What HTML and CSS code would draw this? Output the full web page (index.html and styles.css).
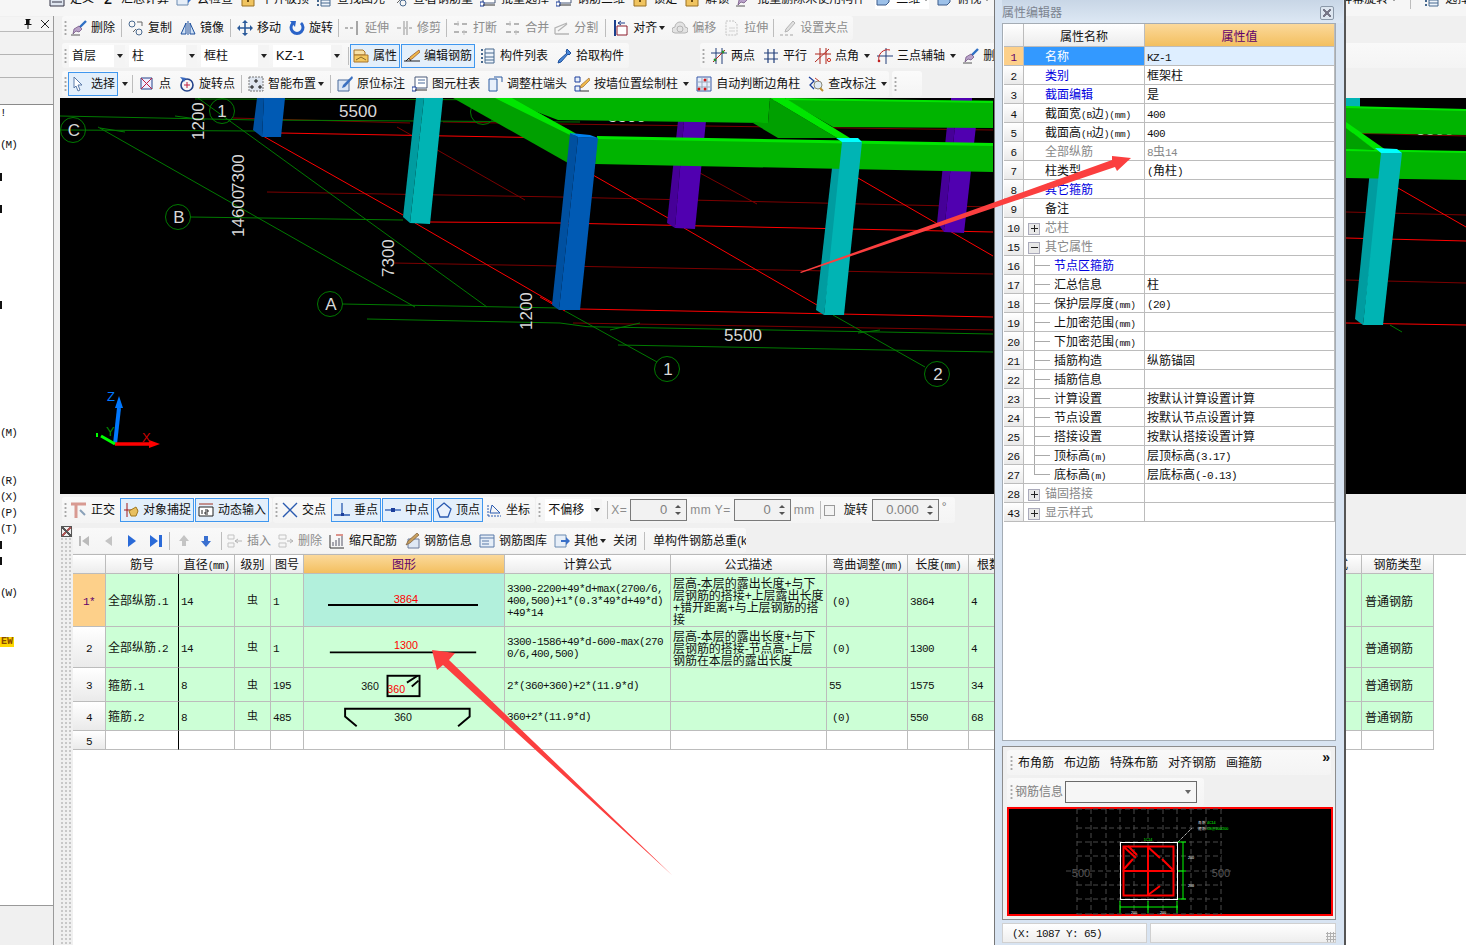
FILE: index.html
```html
<!DOCTYPE html>
<html lang="zh-CN">
<head>
<meta charset="utf-8">
<title>属性编辑器</title>
<link rel="stylesheet" href="styles.css">
</head>
<body>
<svg class="defs" aria-hidden="true">
  <symbol id="brush" viewBox="0 0 16 16"><path d="M15 1L8 8" stroke="#2f6fc4" stroke-width="2.4" fill="none"/><path d="M8 6l3 3-3 3-3-1-3 3 1-5z" fill="#b9a2c9" stroke="#6a4a7a" stroke-width=".7"/><path d="M0 15h9" stroke="#555"/></symbol>
  <symbol id="copy" viewBox="0 0 16 16"><circle cx="4" cy="4" r="3" fill="none" stroke="#4a6a90"/><circle cx="11" cy="12" r="3" fill="none" stroke="#4a6a90"/><path d="M9 2h5M14 2v4M8 9l-3 3" stroke="#666" fill="none"/></symbol>
  <symbol id="mirror" viewBox="0 0 16 16"><path d="M8 1v14" stroke="#1c4f9c"/><path d="M6 3v11H1zM10 3v11h5z" fill="#cfe0f4" stroke="#1c4f9c"/></symbol>
  <symbol id="move" viewBox="0 0 16 16"><path d="M8 1v14M1 8h14" stroke="#2b5a9a" stroke-width="1.6"/><path d="M8 0l3 3H5zM8 16l3-3H5zM0 8l3-3v6zM16 8l-3-3v6z" fill="#2b5a9a"/></symbol>
  <symbol id="rotate" viewBox="0 0 16 16"><path d="M4 3a6 6 0 1 0 8 0" fill="none" stroke="#2a63c8" stroke-width="3"/><path d="M1 1l6 0-1 6z" fill="#2a63c8"/></symbol>
  <symbol id="extend" viewBox="0 0 16 16"><path d="M12 1v14" stroke="#999" stroke-width="2"/><path d="M0 8h10" stroke="#aaa" stroke-dasharray="3 2" stroke-width="2"/></symbol>
  <symbol id="trim" viewBox="0 0 16 16"><path d="M7 1v14M10 1v14" stroke="#aaa" stroke-width="1.5"/><path d="M0 8h15" stroke="#bbb" stroke-width="2" stroke-dasharray="4 2"/></symbol>
  <symbol id="break" viewBox="0 0 16 16"><path d="M1 4h14M1 12h14" stroke="#aaa" stroke-width="2" stroke-dasharray="5 3"/><path d="M5 1v5M11 10v5" stroke="#bbb"/></symbol>
  <symbol id="split" viewBox="0 0 16 16"><path d="M1 14h14M1 14V8l12-5M4 11l9-7" stroke="#aaa" fill="none" stroke-width="1.3"/></symbol>
  <symbol id="align" viewBox="0 0 16 16"><path d="M2 0v16" stroke="#1c3f8c" stroke-width="2"/><path d="M4 6h10v9H4z" fill="#fff" stroke="#8c1c2c"/><path d="M5 3h7M5 3l3-2M5 3l3 2" stroke="#1c3f8c" fill="none"/></symbol>
  <symbol id="cloud" viewBox="0 0 16 16"><path d="M3 13a3 3 0 0 1 0-6 5 5 0 0 1 10 0 3 3 0 0 1 0 6z" fill="#e0e0e0" stroke="#aaa"/><circle cx="8" cy="9" r="3" fill="none" stroke="#aaa"/></symbol>
  <symbol id="stretch" viewBox="0 0 16 16"><path d="M2 1h8l3 3v11H2z" fill="none" stroke="#bbb" stroke-dasharray="2 1"/><path d="M5 8h6M5 11h6" stroke="#ccc"/></symbol>
  <symbol id="grippt" viewBox="0 0 16 16"><path d="M13 1l2 2-7 8-3 1 1-3z" fill="#ddd" stroke="#aaa"/><path d="M0 15h3M5 15h3M10 15h3" stroke="#999"/></symbol>
  <symbol id="prop" viewBox="0 0 16 16"><path d="M1 2h9l2 2v3H1z" fill="#f8e2a8" stroke="#a8742a"/><path d="M1 7h14v7H1z" fill="#f4c860" stroke="#a8742a"/><path d="M3 12l5-3 5 3" stroke="#8a6a2a" fill="none"/></symbol>
  <symbol id="edit" viewBox="0 0 16 16"><path d="M0 13h16" stroke="#222"/><path d="M2 13l3-3 2 3" fill="none" stroke="#222"/><path d="M15 2l1 2-8 7-3 1 1-3z" fill="#f0b848" stroke="#8a4a2a" stroke-width=".7"/></symbol>
  <symbol id="list" viewBox="0 0 16 16"><path d="M5 1h9v14H5z" fill="#eef4fb" stroke="#46688e"/><path d="M5 5h9M5 9h9M5 12h9" stroke="#46688e"/><path d="M1 2h2M1 6h2M1 10h2M1 14h2" stroke="#46688e" stroke-width="2"/></symbol>
  <symbol id="pick" viewBox="0 0 16 16"><path d="M11 1l4 4-2 2-1-1-7 8-3 1 1-3 8-7-1-1z" fill="#4a88d8" stroke="#1c4f9c"/></symbol>
  <symbol id="twopt" viewBox="0 0 16 16"><path d="M5 0v16M11 0v16M0 5h16" stroke="#223f7a"/><path d="M2 14L14 2" stroke="#b0261c"/><circle cx="4" cy="12" r="1.4" fill="#2a8a2a"/><circle cx="12" cy="4" r="1.4" fill="#2a8a2a"/></symbol>
  <symbol id="parallel" viewBox="0 0 16 16"><path d="M5 1v14M11 1v14M1 5h14M1 11h14" stroke="#223f7a" stroke-width="1.2"/></symbol>
  <symbol id="corner" viewBox="0 0 16 16"><path d="M5 0v16M11 0v16M0 6h16" stroke="#b0261c"/><path d="M0 14L14 1" stroke="#b0261c"/><circle cx="14" cy="12" r="1.6" fill="none" stroke="#d03020"/></symbol>
  <symbol id="arc" viewBox="0 0 16 16"><path d="M9 0v16M0 8h16" stroke="#223f7a"/><path d="M2 13a9 9 0 0 1 11-11" fill="none" stroke="#c02020"/><circle cx="2" cy="13" r="1.3" fill="#c02020"/></symbol>
  <symbol id="cursor" viewBox="0 0 16 16"><path d="M3 1l8 8H7l2 5-2 1-2-5-2 2z" fill="#fff" stroke="#5a7aa8"/></symbol>
  <symbol id="pointbox" viewBox="0 0 16 16"><path d="M2 2h11v11H2z" fill="#eef" stroke="#22428a"/><path d="M2 2l11 11M13 2L2 13" stroke="#c02040"/></symbol>
  <symbol id="rotpt" viewBox="0 0 16 16"><circle cx="8" cy="9" r="6" fill="none" stroke="#22428a" stroke-width="1.6"/><path d="M1 1l6 1-2 4z" fill="#3a6ac0"/><path d="M8 6v6M5 9h6" stroke="#c02040"/></symbol>
  <symbol id="smart" viewBox="0 0 16 16"><path d="M1 1h14v14H1z" fill="#dfe6f0" stroke="#777" stroke-dasharray="2 1"/><path d="M8 3v4M6 5h4M4 9v4M2 11h4M12 9v4M10 11h4" stroke="#111"/></symbol>
  <symbol id="orig" viewBox="0 0 16 16"><path d="M1 4h11v11H1z" fill="#dbe6f5" stroke="#4a6a9a"/><path d="M15 0l1 2-8 9-3 1 1-3z" fill="#3a70c0"/></symbol>
  <symbol id="coltab" viewBox="0 0 16 16"><path d="M3 1h12v11H3z" fill="#fff" stroke="#4a5a7a"/><path d="M6 4h7M6 7h7" stroke="#4a6a9a"/><path d="M0 11h4v4H0z" fill="#fff" stroke="#1c3f9c"/><path d="M3 14h12" stroke="#333"/></symbol>
  <symbol id="adj" viewBox="0 0 16 16"><path d="M2 3h8v12H2z" fill="#e8f0fb" stroke="#2a5aa0"/><path d="M7 1h8v5" fill="none" stroke="#2a5aa0"/></symbol>
  <symbol id="wall" viewBox="0 0 16 16"><path d="M1 1h5v5H1zM1 10h5v5H1z" fill="#e8f0fb" stroke="#1c3f9c"/><path d="M6 15h9" stroke="#333"/><path d="M15 2l1 2-7 7-3 1 1-3z" fill="#f0b848" stroke="#8a5a2a" stroke-width=".6"/></symbol>
  <symbol id="auto" viewBox="0 0 16 16"><path d="M1 1h14v14H1z" fill="#e6eefc" stroke="#3a5aa8"/><path d="M6 1v14M11 1v14M1 6h14M1 11h14" stroke="#9ab"/><circle cx="9" cy="4" r="1.5" fill="#d01818"/><circle cx="3" cy="13" r="1.5" fill="#d01818"/><circle cx="9" cy="13" r="1.5" fill="#d01818"/></symbol>
  <symbol id="chk" viewBox="0 0 16 16"><path d="M1 1l5 4-4 4 4 4" fill="none" stroke="#1c3f9c" stroke-width="1.3"/><circle cx="10" cy="9" r="4" fill="#dfeaf7" stroke="#887"/><path d="M12 12l3 3" stroke="#c09030" stroke-width="2"/><path d="M7 2l4 3" stroke="#c04030"/></symbol>
  <symbol id="ortho" viewBox="0 0 16 16"><path d="M0 2h15M5 2v14" stroke="#d89a92" stroke-width="3"/><path d="M9 8l5 5" stroke="#8aa0b8" stroke-width="2"/></symbol>
  <symbol id="snap" viewBox="0 0 16 16"><path d="M1 8h14" stroke="#a01818"/><path d="M4 1v14" stroke="#a01818"/><path d="M6 9l7-4 2 4-2 5H8z" fill="#e8c060" stroke="#a07820"/></symbol>
  <symbol id="dyn" viewBox="0 0 16 16"><path d="M1 2h14" stroke="#a03020"/><path d="M1 5h14v9H1z" fill="#fff" stroke="#222"/><path d="M4 8v4M7 8h3v2H7v2h3" stroke="#222" fill="none"/></symbol>
  <symbol id="cross" viewBox="0 0 16 16"><path d="M1 1l14 14M15 1L1 15" stroke="#2a5ab0" stroke-width="1.4"/></symbol>
  <symbol id="perp" viewBox="0 0 16 16"><path d="M8 1v13M0 13h16" stroke="#2a5ab0" stroke-width="1.3"/><rect x="7" y="11" width="3" height="3" fill="#1c3f9c"/></symbol>
  <symbol id="mid" viewBox="0 0 16 16"><path d="M0 8h16" stroke="#2a5ab0" stroke-width="1.3"/><rect x="6" y="6" width="4" height="4" fill="#1c3f9c"/></symbol>
  <symbol id="vertex" viewBox="0 0 16 16"><path d="M8 1l7 6-3 8H4L1 7z" fill="#eaf2fc" stroke="#2a5ab0" stroke-width="1.3"/></symbol>
  <symbol id="coord" viewBox="0 0 16 16"><path d="M2 14h13M2 14V2" stroke="#2a5ab0" stroke-dasharray="2 1"/><path d="M6 3l8 8H4z" fill="none" stroke="#2a5ab0"/></symbol>
  <symbol id="first" viewBox="0 0 16 16"><path d="M3 3h2v10H3zM13 3v10L6 8z" fill="#bbb"/></symbol>
  <symbol id="prev" viewBox="0 0 16 16"><path d="M12 3v10L5 8z" fill="#c4c4c4"/></symbol>
  <symbol id="next" viewBox="0 0 16 16"><path d="M4 2v12l8-6z" fill="#2a6ad8"/></symbol>
  <symbol id="last" viewBox="0 0 16 16"><path d="M2 2v12l8-6zM11 2h3v12h-3z" fill="#2a6ad8"/></symbol>
  <symbol id="up" viewBox="0 0 16 16"><path d="M8 2l5 6h-3v5H6V8H3z" fill="#c4c4c4"/></symbol>
  <symbol id="down" viewBox="0 0 16 16"><path d="M8 14l5-6h-3V3H6v5H3z" fill="#3a70d0"/></symbol>
  <symbol id="ins" viewBox="0 0 16 16"><path d="M1 2h6v4H1zM1 10h6v4H1z" fill="none" stroke="#bbb"/><path d="M8 8h7M8 8l3-2M8 8l3 2" stroke="#aaa" fill="none"/></symbol>
  <symbol id="del" viewBox="0 0 16 16"><path d="M1 2h7v4H1zM1 10h7v4H1z" fill="none" stroke="#bbb"/><path d="M9 8h6M15 8l-3-2M15 8l-3 2" stroke="#aaa" fill="none"/></symbol>
  <symbol id="scale" viewBox="0 0 16 16"><path d="M1 2v13h14" fill="none" stroke="#333"/><path d="M4 13V9M7 13V7M10 13V5M13 13V3" stroke="#556"/><path d="M7 2h7" stroke="#c03020"/></symbol>
  <symbol id="info" viewBox="0 0 16 16"><path d="M4 6h11v9H4z" fill="#dfe8f4" stroke="#6a7a9a"/><path d="M13 0l2 2-9 8-4 2 2-4z" fill="#c8a060" stroke="#6a4a2a" stroke-width=".6"/></symbol>
  <symbol id="lib" viewBox="0 0 16 16"><path d="M1 2h14v12H1z" fill="#e6eef8" stroke="#5a7aa8"/><path d="M1 5h14M3 8h7M3 11h7" stroke="#5a7aa8"/></symbol>
  <symbol id="other" viewBox="0 0 16 16"><path d="M1 2h11v12H1z" fill="#e6eef8" stroke="#6a8ab0"/><path d="M7 7h5V4l4 4-4 4V9H7z" fill="#3a70c8"/></symbol>
  <symbol id="def" viewBox="0 0 16 16"><path d="M1 1h14v14H1z" fill="#dfe6f0" stroke="#334"/><path d="M3 4h4v4H3zM9 4h4M9 7h4M3 11h10" stroke="#334" fill="none"/></symbol>
  <symbol id="lock" viewBox="0 0 16 16"><path d="M2 2h12v13H2z" fill="#f0c460" stroke="#9a7020"/><path d="M7 6h2v5H7z" fill="#6a4a10"/></symbol>
  <symbol id="box" viewBox="0 0 16 16"><path d="M2 4l3-3h9v10l-3 3H2z" fill="#9cc0e8" stroke="#3a5a8a"/></symbol>
  <symbol id="pin" viewBox="0 0 12 12"><path d="M3.5 1h5v1H8v4h1.5v1h-3v4h-1V7h-3V6H4V2h-.5zM7 2v4h.5V2z" fill="#111"/></symbol>
  <symbol id="close" viewBox="0 0 12 12"><path d="M2 2l8 8M10 2l-8 8" stroke="#222" fill="none"/></symbol>
</svg>

<header class="topbar">
  <div class="tb-top">
    <span class="btn"><svg class="i"><use href="#def"/></svg>定义</span>
    <span class="btn sigma"><b class="sig">Σ</b>汇总计算</span>
    <span class="btn"><svg class="i"><use href="#other"/></svg>云检查</span>
    <span class="btn"><svg class="i"><use href="#lock"/></svg>平齐板顶</span>
    <span class="btn"><svg class="i"><use href="#list"/></svg>查找图元</span>
    <span class="btn"><svg class="i"><use href="#copy"/></svg>查看钢筋量</span>
    <span class="btn"><svg class="i"><use href="#coltab"/></svg>批量选择</span>
    <span class="btn"><svg class="i"><use href="#coltab"/></svg>钢筋三维</span>
    <span class="btn"><svg class="i"><use href="#lock"/></svg>锁定</span>
    <span class="btn"><svg class="i"><use href="#lock"/></svg>解锁</span>
    <span class="btn"><svg class="i"><use href="#brush"/></svg>批量删除未使用构件</span>
    <span class="btn view2"><svg class="i"><use href="#box"/></svg>二维<i class="arr"></i></span>
    <span class="btn"><svg class="i"><use href="#box"/></svg>俯视<i class="arr"></i></span>
    <span class="btn far">屏幕旋转<i class="arr"></i></span>
    <span class="sep"></span>
    <span class="btn"><svg class="i"><use href="#list"/></svg>选择楼层</span>
  </div>
</header>

<div class="workspace">
  <aside class="dock">
    <div class="dock-title"><svg class="dock-ic"><use href="#pin"/></svg><svg class="dock-ic"><use href="#close"/></svg></div>
    <div class="dock-tab"></div>
    <div class="dock-tab"></div>
    <div class="dock-gap"></div>
    <div class="dock-list">
      <div>!</div><div></div><div>(M)</div><div></div><div><i class="tick"></i></div><div></div><div><i class="tick"></i></div><div></div><div></div><div></div><div></div><div></div><div><i class="tick"></i></div>
      <div></div><div></div><div></div><div></div><div></div><div></div><div></div><div>(M)</div><div></div><div></div>
      <div>(R)</div><div>(X)</div><div>(P)</div><div>(T)</div><div><i class="tick"></i></div><div><i class="tick"></i></div><div></div><div>(W)</div><div></div><div></div>
      <div><span class="new">EW</span></div>
    </div>
    <div class="dock-foot"></div>
  </aside>

  <main class="main">
    <div class="row r1">
      <div class="tb tb-edit">
        <i class="grip"></i>
        <span class="btn"><svg class="i"><use href="#brush"/></svg>删除</span><i class="sep"></i>
        <span class="btn"><svg class="i"><use href="#copy"/></svg>复制</span>
        <span class="btn"><svg class="i"><use href="#mirror"/></svg>镜像</span><i class="sep"></i>
        <span class="btn"><svg class="i"><use href="#move"/></svg>移动</span>
        <span class="btn"><svg class="i"><use href="#rotate"/></svg>旋转</span><i class="sep sep-s"></i>
        <span class="btn off"><svg class="i"><use href="#extend"/></svg>延伸</span>
        <span class="btn off"><svg class="i"><use href="#trim"/></svg>修剪</span><i class="sep sep-s"></i>
        <span class="btn off"><svg class="i"><use href="#break"/></svg>打断</span>
        <span class="btn off"><svg class="i"><use href="#break"/></svg>合并</span>
        <span class="btn off tight"><svg class="i"><use href="#split"/></svg>分割</span><i class="sep sep-w"></i>
        <span class="btn"><svg class="i"><use href="#align"/></svg>对齐<i class="arr"></i></span>
        <span class="btn off n1"><svg class="i"><use href="#cloud"/></svg>偏移</span>
        <span class="btn off"><svg class="i"><use href="#stretch"/></svg>拉伸</span><i class="sep sep-s"></i>
        <span class="btn off"><svg class="i"><use href="#grippt"/></svg>设置夹点</span>
      </div>
    </div>

    <div class="row r2">
      <div class="tb tb-combos">
        <i class="grip"></i>
        <span class="combo c56">首层<i class="drop"><i class="arr"></i></i></span>
        <span class="combo c68">柱<i class="drop"><i class="arr"></i></i></span>
        <span class="combo c68">框柱<i class="drop"><i class="arr"></i></i></span>
        <span class="combo c69"><span class="m">KZ-1</span><i class="drop"><i class="arr"></i></i></span>
        <i class="sep sep-n"></i>
        <span class="btn on"><svg class="i"><use href="#prop"/></svg>属性</span>
        <span class="btn on on-join"><svg class="i"><use href="#edit"/></svg>编辑钢筋</span>
        <span class="btn"><svg class="i"><use href="#list"/></svg>构件列表</span>
        <span class="btn"><svg class="i"><use href="#pick"/></svg>拾取构件</span>
      </div>
      <div class="tb tb-axis">
        <i class="grip"></i>
        <span class="btn"><svg class="i"><use href="#twopt"/></svg>两点</span>
        <span class="btn"><svg class="i"><use href="#parallel"/></svg>平行</span>
        <span class="btn"><svg class="i"><use href="#corner"/></svg>点角<i class="arr arr-w"></i></span>
        <span class="btn"><svg class="i"><use href="#arc"/></svg>三点辅轴<i class="arr arr-w"></i></span>
        <span class="btn"><svg class="i"><use href="#brush"/></svg>删除</span>
      </div>
    </div>

    <div class="row r3">
      <div class="tb tb-draw">
        <i class="grip"></i>
        <span class="btn on"><svg class="i"><use href="#cursor"/></svg>选择</span><i class="arr arr-solo"></i><i class="sep"></i>
        <span class="btn"><svg class="i"><use href="#pointbox"/></svg>点</span>
        <span class="btn"><svg class="i"><use href="#rotpt"/></svg>旋转点</span><i class="sep"></i>
        <span class="btn"><svg class="i"><use href="#smart"/></svg>智能布置<i class="arr"></i></span><i class="sep"></i>
        <span class="btn"><svg class="i"><use href="#orig"/></svg>原位标注</span>
        <span class="btn n1"><svg class="i"><use href="#coltab"/></svg>图元柱表</span>
        <span class="btn n1"><svg class="i"><use href="#adj"/></svg>调整柱端头</span>
        <span class="btn n1"><svg class="i"><use href="#wall"/></svg>按墙位置绘制柱<i class="arr arr-w"></i></span>
        <span class="btn"><svg class="i"><use href="#auto"/></svg>自动判断边角柱</span>
        <span class="btn"><svg class="i"><use href="#chk"/></svg>查改标注<i class="arr arr-w"></i></span>
      </div>
      <div class="tb tb-stub"><i class="grip"></i></div>
    </div>

    <svg class="scene" viewBox="60 98 1406 396" aria-label="三维视图">
      <rect x="60" y="98" width="1406" height="396" fill="#000"/>
      <g fill="none" stroke="#7a0000">
        <path d="M233 118L410 123M443 122L560 124L993 130M1346 133L1466 136"/>
        <path d="M267 192L560 197L993 207M1346 212L1466 215"/>
        <path d="M393 263L560 266L993 274M1346 280L1466 283"/>
        <path d="M573 323L993 330"/>
        <path d="M397 127L525 200M700 173L757 204"/>
      </g>
      <g fill="none" stroke="#f00">
        <path d="M280 133L560 138M430 222L560 223L993 232M1346 238L1466 241"/>
        <path d="M580 309L993 317M1346 323L1466 325"/>
        <path d="M263 136L403 215M415 223L553 303M593 175L668 218M684 228L817 305M858 178L993 256M1398 188L1466 227M540 297L565 311"/>
      </g>
      <g fill="none" stroke="#007a00">
        <path d="M60 116L257 120L580 122M60 130L260 131M195 99L993 101"/>
        <path d="M190 217L403 220"/>
        <path d="M342 304L560 308"/>
        <path d="M367 319L560 323L587 326.7L993 334"/>
        <path d="M618 345L993 352"/>
        <path d="M98 127L415 307M198 98L487 307M565 311L657 362M833 315L925 367M1390 325L1402 332"/>
        <path d="M100 128L125 132M175 116L205 120M610 330L640 323M858 333L880 330"/>
        <g stroke-width="1">
          <circle cx="73" cy="130" r="12.5"/><circle cx="222" cy="111" r="12.5"/><circle cx="178" cy="217" r="12.5"/><circle cx="330" cy="304" r="12.5"/><circle cx="667" cy="369" r="12.5"/><circle cx="937" cy="374" r="12.5"/><circle cx="483" cy="112" r="12.5"/>
        </g>
      </g>
      <g class="dim">
        <text x="74" y="136" text-anchor="middle">C</text>
        <text x="222" y="117" text-anchor="middle">1</text>
        <text x="179" y="223" text-anchor="middle">B</text>
        <text x="331" y="310" text-anchor="middle">A</text>
        <text x="668" y="375" text-anchor="middle">1</text>
        <text x="938" y="380" text-anchor="middle">2</text>
        <text x="358" y="117" text-anchor="middle">5500</text>
        <text x="743" y="341" text-anchor="middle">5500</text>
        <text x="627" y="122" text-anchor="middle">5500</text>
        <text x="897" y="125" text-anchor="middle">5500</text>
        <text x="1435" y="135" text-anchor="middle">5500</text>
        <text transform="translate(204 140) rotate(-90)">1200</text>
        <text transform="translate(244 237) rotate(-90)">14600</text>
        <text transform="translate(244 192) rotate(-90)">7300</text>
        <text transform="translate(394 277) rotate(-90)">7300</text>
        <text transform="translate(532 330) rotate(-90)">1200</text>
      </g>
      <!-- rear columns -->
      <polygon points="678,121 684,121 675,228 667,223" fill="#460098"/>
      <polygon points="684,121 706,121 695,229 675,228" fill="#5000b0"/>
      <polygon points="947,126 955,126 944,232 937,223" fill="#460098"/>
      <polygon points="955,126 976,126 964,233 944,232" fill="#5000b0"/>
      <polygon points="951,98 972,98 972,101 951,101" fill="#5000b0"/>
      <polygon points="257,98 264,98 262,137 253,130" fill="#0050a0"/>
      <polygon points="264,98 285,98 281,137 262,137" fill="#005ab4"/>
      <polygon points="416,98 424,98 410,223 403,217" fill="#009ca0"/>
      <polygon points="424,98 443,98 430,224 410,223" fill="#00b4b4"/>
      <rect x="1346" y="98" width="14" height="9" fill="#00b4b4"/>
      <!-- side of front columns behind beams -->
      <polygon points="832,168 842,168 824,315 816,310" fill="#009ca0"/>
      <polygon points="1370,170 1381,170 1363,325 1355,319" fill="#009ca0"/>
      <!-- beams -->
      <polygon points="500,98 770,98 768,123 558,120" fill="#00b400"/>
      <polygon points="785,99 993,102 993,128 833,127" fill="#00b400"/>
      <polygon points="1346,107 1466,110 1466,135 1346,133" fill="#00b400"/>
      <polygon points="785,98 993,101 993,103 787,100" fill="#00e600"/>
      <polygon points="1346,106 1466,109 1466,111 1346,108" fill="#00e600"/>
      <polygon points="453,98 512,98 575,133 568,163" fill="#00a000"/>
      <polygon points="495,98 512,98 578,135 570,135" fill="#00e600"/>
      <polygon points="770,98 768,123 753,123 778,138 837,138" fill="#00a000"/>
      <polygon points="770,98 785,98 850,138 837,138" fill="#00e600"/>
      <polygon points="1346,128 1346,149 1375,149" fill="#00a000"/>
      <polygon points="1346,122 1346,128 1375,150 1386,150" fill="#00e600"/>
      <polygon points="597,138 993,145 993,172 595,164" fill="#00b400"/>
      <polygon points="597,136 993,143 993,146 597,139" fill="#00e600"/>
      <polygon points="1346,149 1466,152 1466,180 1346,178" fill="#00b400"/>
      <polygon points="1346,149 1466,151 1466,153 1346,151" fill="#00e600"/>
      <!-- front columns -->
      <polygon points="570,133 578,137 559,310 552,305" fill="#0050a0"/>
      <polygon points="578,137 598,138 580,310 559,310" fill="#005ab4"/>
      <polygon points="570,133 590,135 598,138 578,137" fill="#0080f0"/>
      <polygon points="842,142 862,142 844,315 824,315" fill="#00b4b4"/>
      <polygon points="836,138 858,138 862,142 842,142" fill="#00ffff"/>
      <polygon points="1381,153 1402,153 1383,325 1363,325" fill="#00b4b4"/>
      <polygon points="1375,148 1397,149 1402,153 1381,153" fill="#00ffff"/>
      <!-- axes -->
      <g class="axes">
        <path d="M115 444L119 408" stroke="#0078ff" stroke-width="4"/>
        <path d="M119 396L123 408H115z" fill="#0078ff"/>
        <path d="M115 444H150" stroke="#f00" stroke-width="3.5"/>
        <path d="M160 444L149 440V448z" fill="#f00"/>
        <path d="M115 444L101 436" stroke="#0f0" stroke-width="3"/>
        <path d="M97 433v4" stroke="#0f0" stroke-width="2"/>
        <text x="107" y="401" fill="#0078ff">Z</text>
        <text x="142" y="442" fill="#c00">X</text>
        <text x="106" y="436" fill="#080">Y</text>
      </g>
    </svg>

    <div class="row r4">
      <div class="tb tb-snap">
        <i class="grip"></i>
        <span class="btn"><svg class="i"><use href="#ortho"/></svg>正交</span>
        <span class="btn on"><svg class="i"><use href="#snap"/></svg>对象捕捉</span>
        <span class="btn on on-join"><svg class="i"><use href="#dyn"/></svg>动态输入</span>
      </div>
      <div class="tb tb-pts">
        <i class="grip"></i>
        <span class="btn"><svg class="i"><use href="#cross"/></svg>交点</span>
        <span class="btn on"><svg class="i"><use href="#perp"/></svg>垂点</span>
        <span class="btn on on-join"><svg class="i"><use href="#mid"/></svg>中点</span>
        <span class="btn on on-join"><svg class="i"><use href="#vertex"/></svg>顶点</span>
        <span class="btn coordbtn"><svg class="i"><use href="#coord"/></svg>坐标</span>
      </div>
      <div class="tb tb-off">
        <i class="grip"></i>
        <span class="combo c57">不偏移<i class="drop"><i class="arr"></i></i></span>
        <i class="sep sep-n"></i>
        <span class="lbl">X=</span>
        <span class="spin"><span class="m">0</span><i class="spin-btns"><i class="up"></i><i class="dn"></i></i></span>
        <span class="lbl">mm Y=</span>
        <span class="spin"><span class="m">0</span><i class="spin-btns"><i class="up"></i><i class="dn"></i></i></span>
        <span class="lbl">mm</span>
        <i class="sep sep-n"></i>
        <i class="cb"></i>
        <span class="rot">旋转</span>
        <span class="spin spin-w"><span class="m">0.000</span><i class="spin-btns"><i class="up"></i><i class="dn"></i></i></span>
        <span class="deg">°</span>
      </div>
    </div>

    <div class="lower">
      <div class="strip"><span class="strip-x"></span><div class="dots"></div></div>
      <div class="lower-main">
        <div class="tb tb-rebar">
          <span class="btn nav"><svg class="i"><use href="#first"/></svg></span>
          <span class="btn nav"><svg class="i"><use href="#prev"/></svg></span>
          <span class="btn nav"><svg class="i"><use href="#next"/></svg></span>
          <span class="btn nav"><svg class="i"><use href="#last"/></svg></span>
          <i class="sep sep-a"></i>
          <span class="btn nav2"><svg class="i"><use href="#up"/></svg></span>
          <span class="btn nav2"><svg class="i"><use href="#down"/></svg></span>
          <i class="sep sep-b"></i>
          <span class="btn off"><svg class="i"><use href="#ins"/></svg>插入</span>
          <span class="btn off"><svg class="i"><use href="#del"/></svg>删除</span>
          <span class="btn"><svg class="i"><use href="#scale"/></svg>缩尺配筋</span>
          <span class="btn"><svg class="i"><use href="#info"/></svg>钢筋信息</span>
          <span class="btn"><svg class="i"><use href="#lib"/></svg>钢筋图库</span>
          <span class="btn"><svg class="i"><use href="#other"/></svg>其他<i class="arr"></i></span>
          <span class="btn">关闭</span>
          <i class="sep sep-c"></i>
          <span class="weight">单构件钢筋总重(kg)：0</span>
        </div>
        <div class="sheet">
        <table class="rebar">
          <colgroup>
            <col class="w33"><col class="w73"><col class="w56"><col class="w36"><col class="w33"><col class="w201"><col class="w166"><col class="w156"><col class="w81"><col class="w61"><col class="w41"><col class="w270"><col class="w82"><col class="w72">
          </colgroup>
          <thead>
            <tr>
              <th></th><th class="bk">筋号</th><th>直径<span class="m">(mm)</span></th><th>级别</th><th>图号</th><th class="hl">图形</th><th>计算公式</th><th>公式描述</th><th>弯曲调整<span class="m">(mm)</span></th><th>长度<span class="m">(mm)</span></th><th>根数</th><th></th><th class="clip">搭接形式</th><th>钢筋类型</th>
            </tr>
          </thead>
          <tbody>
            <tr class="h1">
              <td class="no sel"><span class="m">1*</span></td><td class="bk">全部纵筋<span class="m">.1</span></td><td class="m">14</td><td class="ctr">虫</td><td class="m">1</td>
              <td class="shape cur"><svg class="sh" viewBox="0 0 200 52"><path d="M24 31H174" stroke="#000" stroke-width="2"/><text x="102" y="29" class="t-r" text-anchor="middle">3864</text></svg></td>
              <td class="m f">3300-2200+49*d+max(2700/6,<br>400,500)+1*(0.3*49*d+49*d)<br>+49*14</td>
              <td class="d">层高-本层的露出长度+与下<br>层钢筋的搭接+上层露出长度<br>+错开距离+与上层钢筋的搭<br>接</td>
              <td class="m bend">(0)</td><td class="m">3864</td><td class="m">4</td><td></td><td></td><td class="kind">普通钢筋</td>
            </tr>
            <tr class="h2">
              <td class="no"><span class="m">2</span></td><td class="bk">全部纵筋<span class="m">.2</span></td><td class="m">14</td><td class="ctr">虫</td><td class="m">1</td>
              <td class="shape"><svg class="sh" viewBox="0 0 200 41"><path d="M24 26H174" stroke="#000" stroke-width="2"/><text x="102" y="23" class="t-r" text-anchor="middle">1300</text></svg></td>
              <td class="m f">3300-1586+49*d-600-max(270<br>0/6,400,500)</td>
              <td class="d">层高-本层的露出长度+与下<br>层钢筋的搭接-节点高-上层<br>钢筋在本层的露出长度</td>
              <td class="m bend">(0)</td><td class="m">1300</td><td class="m">4</td><td></td><td></td><td class="kind">普通钢筋</td>
            </tr>
            <tr class="h3">
              <td class="no"><span class="m">3</span></td><td class="bk">箍筋<span class="m">.1</span></td><td class="m">8</td><td class="ctr">虫</td><td class="m">195</td>
              <td class="shape"><svg class="sh" viewBox="0 0 200 34"><rect x="83" y="8" width="33" height="21" fill="none" stroke="#000" stroke-width="2"/><path d="M103 15L114 8M108 19L115 13" stroke="#000" stroke-width="2"/><text x="65" y="23" class="t-b" text-anchor="middle">360</text><text x="92" y="26" class="t-r" text-anchor="middle">360</text></svg></td>
              <td class="m f">2*(360+360)+2*(11.9*d)</td><td></td>
              <td class="m">55</td><td class="m">1575</td><td class="m">34</td><td></td><td></td><td class="kind">普通钢筋</td>
            </tr>
            <tr class="h4">
              <td class="no"><span class="m">4</span></td><td class="bk">箍筋<span class="m">.2</span></td><td class="m">8</td><td class="ctr">虫</td><td class="m">485</td>
              <td class="shape"><svg class="sh" viewBox="0 0 200 29"><path d="M51 25L39 15V7H168V15L156 25" fill="none" stroke="#000" stroke-width="2"/><text x="99" y="20" class="t-b" text-anchor="middle">360</text></svg></td>
              <td class="m f">360+2*(11.9*d)</td><td></td>
              <td class="m bend">(0)</td><td class="m">550</td><td class="m">68</td><td></td><td></td><td class="kind">普通钢筋</td>
            </tr>
            <tr class="h5 blank">
              <td class="no"><span class="m">5</span></td><td class="bk"></td><td></td><td></td><td></td><td></td><td></td><td></td><td></td><td></td><td></td><td></td><td></td><td></td>
            </tr>
          </tbody>
        </table>
        </div>
      </div>
    </div>
  </main>
</div>

<section class="win">
  <div class="win-title"><span>属性编辑器</span><span class="win-x"></span></div>
  <div class="grid-panel">
    <table class="props">
      <colgroup><col class="p20"><col class="p121"><col class="p190"></colgroup>
      <thead><tr><th></th><th>属性名称</th><th class="hl">属性值</th></tr></thead>
      <tbody>
        <tr class="sel-row"><td class="no sel"><span class="m">1</span></td><td class="name">名称</td><td class="val"><span class="m">KZ-1</span></td></tr>
        <tr><td class="no"><span class="m">2</span></td><td class="name link">类别</td><td>框架柱</td></tr>
        <tr><td class="no"><span class="m">3</span></td><td class="name link">截面编辑</td><td>是</td></tr>
        <tr><td class="no"><span class="m">4</span></td><td class="name">截面宽<span class="m">(B</span>边<span class="m">)(mm)</span></td><td class="m">400</td></tr>
        <tr><td class="no"><span class="m">5</span></td><td class="name">截面高<span class="m">(H</span>边<span class="m">)(mm)</span></td><td class="m">400</td></tr>
        <tr class="mute"><td class="no"><span class="m">6</span></td><td class="name">全部纵筋</td><td><span class="m">8</span>虫<span class="m">14</span></td></tr>
        <tr><td class="no"><span class="m">7</span></td><td class="name">柱类型</td><td><span class="m">(</span>角柱<span class="m">)</span></td></tr>
        <tr><td class="no"><span class="m">8</span></td><td class="name link">其它箍筋</td><td></td></tr>
        <tr><td class="no"><span class="m">9</span></td><td class="name">备注</td><td></td></tr>
        <tr class="mute"><td class="no"><span class="m">10</span></td><td class="name grp"><i class="ex plus"></i>芯柱</td><td></td></tr>
        <tr class="mute"><td class="no"><span class="m">15</span></td><td class="name grp"><i class="ex"></i>其它属性</td><td></td></tr>
        <tr><td class="no"><span class="m">16</span></td><td class="name tree link">节点区箍筋</td><td></td></tr>
        <tr><td class="no"><span class="m">17</span></td><td class="name tree">汇总信息</td><td>柱</td></tr>
        <tr><td class="no"><span class="m">18</span></td><td class="name tree">保护层厚度<span class="m">(mm)</span></td><td class="m">(20)</td></tr>
        <tr><td class="no"><span class="m">19</span></td><td class="name tree">上加密范围<span class="m">(mm)</span></td><td></td></tr>
        <tr><td class="no"><span class="m">20</span></td><td class="name tree">下加密范围<span class="m">(mm)</span></td><td></td></tr>
        <tr><td class="no"><span class="m">21</span></td><td class="name tree">插筋构造</td><td>纵筋锚固</td></tr>
        <tr><td class="no"><span class="m">22</span></td><td class="name tree">插筋信息</td><td></td></tr>
        <tr><td class="no"><span class="m">23</span></td><td class="name tree">计算设置</td><td>按默认计算设置计算</td></tr>
        <tr><td class="no"><span class="m">24</span></td><td class="name tree">节点设置</td><td>按默认节点设置计算</td></tr>
        <tr><td class="no"><span class="m">25</span></td><td class="name tree">搭接设置</td><td>按默认搭接设置计算</td></tr>
        <tr><td class="no"><span class="m">26</span></td><td class="name tree">顶标高<span class="m">(m)</span></td><td>层顶标高<span class="m">(3.17)</span></td></tr>
        <tr><td class="no"><span class="m">27</span></td><td class="name tree tree-end">底标高<span class="m">(m)</span></td><td>层底标高<span class="m">(-0.13)</span></td></tr>
        <tr class="mute"><td class="no"><span class="m">28</span></td><td class="name grp"><i class="ex plus"></i>锚固搭接</td><td></td></tr>
        <tr class="mute"><td class="no"><span class="m">43</span></td><td class="name grp"><i class="ex plus"></i>显示样式</td><td></td></tr>
      </tbody>
    </table>
  </div>

  <div class="section-panel">
    <div class="tb tb-sec">
      <i class="grip"></i>
      <span class="sec-btn">布角筋</span><span class="sec-btn">布边筋</span><span class="sec-btn">特殊布筋</span><span class="sec-btn">对齐钢筋</span><span class="sec-btn">画箍筋</span>
      <span class="more">»</span>
    </div>
    <div class="tb tb-sec2">
      <i class="grip"></i>
      <span class="sec-lbl">钢筋信息</span>
      <span class="sec-combo"><i class="arr"></i></span>
    </div>
    <svg class="section" viewBox="1007 808 326 109" aria-label="截面图">
      <rect x="1007" y="808" width="326" height="109" fill="#000" stroke="#f00" stroke-width="4"/>
      <g stroke="#4a4a4a" stroke-dasharray="5 3" fill="none">
        <path d="M1077 810V915M1091 810V915M1106 810V915M1120 810V915M1134 810V915M1148 810V915M1163 810V915M1177 810V915M1191 810V915M1206 810V915M1221 810V915"/>
        <path d="M1077 810H1222M1077 829H1222M1077 843H1222M1077 857H1222M1066 872H1232M1077 886H1222M1077 900H1222M1077 915H1222"/>
      </g>
      <text x="1081" y="878" class="sec-t" text-anchor="middle">500</text>
      <text x="1221" y="878" class="sec-t" text-anchor="middle">500</text>
      <rect x="1120.5" y="843.5" width="57" height="57" fill="none" stroke="#fff" stroke-width="1"/>
      <g stroke="#f00" fill="none" stroke-width="2">
        <rect x="1123.5" y="847.5" width="50" height="49"/>
        <path d="M1148 847V897M1123 872H1174M1124 848L1136 859M1128 847L1137 856M1124 870L1133 860M1148 848L1160 859M1162 860L1173 871M1148 896L1160 887"/>
      </g>
      <path d="M1178 843L1192 829" stroke="#fff" stroke-dasharray="1 1"/>
      <path d="M1183 843V900M1120 908H1178" stroke="#0f0"/>
      <path d="M1178 843H1186M1178 872H1186M1178 900H1186M1120 902V914M1148 902V914M1177 902V914" stroke="#0f0"/>
      <text x="1198" y="825" class="sec-s" fill="#ddd">角筋</text>
      <text x="1198" y="831" class="sec-s" fill="#ddd">箍筋</text>
      <text x="1207" y="825" class="sec-s" fill="#0f0">4C14</text>
      <text x="1207" y="831" class="sec-s" fill="#0f0">C8@100/200</text>
      <text x="1148" y="842" class="sec-s" fill="#0f0" text-anchor="middle">1C14</text>
      <text x="1188" y="860" class="sec-s" fill="#fff">200</text>
      <text x="1188" y="888" class="sec-s" fill="#fff">200</text>
      <text x="1134" y="915" class="sec-s" fill="#fff" text-anchor="middle">200</text>
      <text x="1163" y="915" class="sec-s" fill="#fff" text-anchor="middle">200</text>
    </svg>
  </div>
  <div class="status">
    <span class="st-a"><span class="m">(X: 1087 Y: 65)</span></span>
    <span class="st-b"></span>
    <i class="st-grip"></i>
  </div>
</section>

<svg class="marks" viewBox="0 0 1466 945" aria-hidden="true">
  <polygon points="800,272 1112,160 1112,156 1131,158 1117,171 1115,167 801,273" fill="#fb3f3f"/>
  <polygon points="673,876 449,660 455,653 432,650 437,670 443,665" fill="#fb3f3f"/>
</svg>
</body>
</html>
```

FILE: styles.css
```css
* { box-sizing: border-box; }
html, body { margin: 0; padding: 0; }
body {
  position: relative;
  width: 1466px;
  height: 945px;
  overflow: hidden;
  background: #f0f0f0;
  color: #111;
  font: 12px/16px "Liberation Sans", "Noto Sans CJK SC", sans-serif;
}
i { font-style: normal; display: block; }
.defs { display: block; width: 0; height: 0; }
.m { font-family: "Liberation Mono", "Noto Sans CJK SC", monospace; font-size: 11px; letter-spacing: -.6px; }
td.m, th.m { letter-spacing: -.6px; }

/* top bar, cropped by the window edge */
.topbar { height: 16px; overflow: hidden; background: #f6f6f6; }
.tb-top { display: flex; align-items: center; gap: 7px; height: 16px; margin-top: -9px; padding-left: 49px; white-space: nowrap; }
.tb-top .btn { gap: 5px; }
.sig { font: bold 13px "Liberation Sans", sans-serif; width: 12px; margin-left: 3px; }
.sigma { gap: 5px; }
.view2 { margin-left: 3px; background: #fff; }
.far { margin-left: 343px; }
.tb-top .sep { margin: 0 6px; height: 20px; }

.workspace { display: flex; height: 929px; }

/* left dock */
.dock { flex: 0 0 54px; border-right: 1px solid #9a9a9a; display: flex; flex-direction: column; overflow: hidden; }
.dock-title { height: 15px; margin-top: 1px; display: flex; justify-content: flex-end; align-items: center; gap: 5px; padding-right: 2px; background: #f4f4f4; border-bottom: 1px solid #bbb; }
.dock-ic { width: 12px; height: 12px; flex: none; display: block; }
.dock-tab { height: 23px; background: #f2f2f2; border-bottom: 1px solid #b4b4b4; }
.dock-gap { height: 27px; border-bottom: 1px solid #8a8a8a; }
.dock-list { height: 800px; background: #fff; overflow: hidden; font: 11px/16px "Liberation Mono", monospace; letter-spacing: -1px; }
.dock-list div { height: 16px; white-space: nowrap; display: flow-root; }
.tick { width: 2px; height: 8px; margin-top: 4px; background: #111; }
.new { display: inline-block; background: #ffd800; color: #8a4a00; font-size: 10px; line-height: 10px; font-weight: bold; padding: 0 1px; letter-spacing: 0; }
.dock-foot { flex: 1; border-top: 1px solid #999; }

/* main column */
.main { flex: 1; min-width: 0; margin-left: 6px; display: flex; flex-direction: column; }
.row { display: flex; align-items: stretch; white-space: nowrap; }
.r1 { height: 24px; margin-left: 2px; }
.r2 { height: 25px; margin-top: 3px; margin-left: 2px; }
.r3 { height: 26px; margin-top: 3px; margin-left: 2px; }
.r4 { height: 26px; margin-top: 3px; margin-left: 2px; gap: 1px; }

.tb { display: flex; align-items: center; gap: 8px; background: linear-gradient(#f9f9f9, #f4f4f4); border-radius: 3px; padding-right: 5px; }
.grip { width: 3px; height: 16px; margin: 0 -1px 0 2px; background: radial-gradient(circle, #a8a8a8 1px, transparent 1.2px) 0 0 / 3px 4px; flex: none; }
.tb-edit .grip { margin-right: -4px; }
.btn { display: inline-flex; align-items: center; gap: 4px; height: 20px; white-space: nowrap; flex: none; }
.i { width: 16px; height: 16px; flex: none; display: block; }
.off { color: #8c8c8c; }
.off .i { opacity: .85; }
.sep { width: 1px; height: 18px; background: #bdbdbd; margin: 0 -2px; flex: none; }
.sep-s { margin: 0 -2px 0 -3px; }
.sep-w { margin: 0 -1px; }
.sep-n { margin: 0 -4px; }
.tight { margin-left: -3px; }
.n1 { margin-left: -1px; }
.arr { width: 0; height: 0; border: 3.5px solid transparent; border-top: 4px solid #222; border-bottom: 0; margin-left: -2px; flex: none; }
.arr-w { margin-left: 1px; margin-right: -1px; }
.arr-solo { margin: 0 -2px 0 -4px; }
.on { background: #e3effb; border: 1px solid #3f97ef; height: 24px; padding: 0 2px; }
.on-join { margin-left: -7px; }

.tb-combos { gap: 4px; padding-right: 5px; }
.tb-combos .grip { margin-right: -2px; }
.tb-combos .sep-n { margin: 0 -3px 0 2px; }
.tb-combos .on-join { margin-left: -3px; }
.tb-combos .btn:nth-last-child(2) { margin-left: 1px; }
.tb-combos .btn:last-child { margin-left: 4px; }
.combo { display: flex; align-items: center; justify-content: space-between; height: 22px; background: #fff; padding-left: 3px; flex: none; }
.combo .m { font: 13px "Liberation Sans", sans-serif; letter-spacing: 0; }
.c56 { width: 56px; } .c57 { width: 57px; } .c68 { width: 68px; } .c69 { width: 69px; }
.drop { display: flex; align-items: center; justify-content: center; width: 11px; height: 22px; background: #f4f4f4; }
.drop .arr { margin: 0; }
.tb-axis { margin-left: 71px; flex: 1; border-radius: 3px 0 0 3px; }
.tb-axis .grip { margin-right: -2px; }

.tb-draw .grip { margin-right: -7px; }
.tb-draw { padding-right: 3px; }
.tb-stub { margin-left: 3px; width: 30px; background: linear-gradient(#fbfbfb, #f4f4f4); }
.tb-stub .grip { margin-left: 2px; }

/* 3D scene */
.scene { display: block; width: 1406px; height: 396px; margin-top: 1px; flex: none; }
.dim text { fill: #d8d8d8; font: 17px "Liberation Sans", sans-serif; }
.axes text { font: 13px "Liberation Sans", sans-serif; }

/* snapping bar */
.tb-snap { gap: 5px; padding-right: 3px; }
.tb-snap .on-join { margin-left: -4px; }
.tb-pts { gap: 5px; padding-right: 5px; }
.tb-pts .on-join { margin-left: -4px; }
.coordbtn { margin-left: -2px; }
.tb-off { gap: 3px; padding-right: 8px; }
.tb-off .grip { margin-right: 1px; }
.tb-off .sep-n { margin: 0 0 0 2px; }
.lbl { color: #8c8c8c; font-family: "Liberation Sans", sans-serif; font-size: 12px; letter-spacing: .5px; }
.spin { display: flex; justify-content: flex-end; align-items: center; width: 57px; height: 22px; border: 1px solid #7a7a7a; background: #f2f2f2; color: #808080; flex: none; }
.spin .m { font-size: 13px; letter-spacing: 0; font-family: "Liberation Sans", sans-serif; }
.spin-w { width: 67px; margin-left: 1px; }
.spin-btns { width: 16px; height: 20px; margin-left: 3px; display: flex; flex-direction: column; justify-content: center; align-items: center; gap: 4px; }
.up { width: 0; height: 0; border: 3px solid transparent; border-bottom: 3px solid #555; border-top: 0; }
.dn { width: 0; height: 0; border: 3px solid transparent; border-top: 3px solid #555; border-bottom: 0; }
.cb { width: 11px; height: 11px; border: 1px solid #9a9a9a; background: #f4f4f4; flex: none; }
.rot { margin-left: 6px; }
.deg { color: #777; align-self: flex-start; margin-top: 2px; }

/* lower section */
.lower { display: flex; flex: 1; min-height: 0; margin-top: 2px; }
.strip { flex: 0 0 13px; display: flex; flex-direction: column; align-items: center; }
.strip-x { display: block; width: 11px; height: 11px; margin-top: 1px; border: 1px solid #555; background: linear-gradient(45deg, transparent 44%, #555 44%, #555 56%, transparent 56%), linear-gradient(-45deg, transparent 44%, #a55 44%, #a55 56%, transparent 56%), #eee; flex: none; }
.dots { flex: 1; width: 100%; background: radial-gradient(circle, #c8c8c8 1px, transparent 1.2px) 0 0 / 4px 4px; }
.lower-main { flex: 1; min-width: 0; display: flex; flex-direction: column; }
.tb-rebar { width: 673px; height: 25px; margin-top: 3px; padding-left: 2px; overflow: hidden; white-space: nowrap; gap: 7px; flex: none; }
.nav { width: 17px; justify-content: center; }
.nav2 { width: 15px; justify-content: center; }
.sep-a { margin: 0 -1px 0 -2px; }
.sep-b { margin: 0 -2px 0 1px; }
.sep-c { margin: 0 1px 0 0; }
.weight { flex: none; }
.sheet { flex: 1; background: #fff; border-top: 1px solid #b8b8b8; margin-top: 1px; overflow: hidden; }

/* tables */
table { border-collapse: separate; border-spacing: 0; table-layout: fixed; font-size: 12px; }
.rebar { width: 1361px; }
.w33 { width: 33px; } .w73 { width: 73px; } .w56 { width: 56px; } .w36 { width: 36px; } .w201 { width: 201px; }
.w166 { width: 166px; } .w156 { width: 156px; } .w81 { width: 81px; } .w61 { width: 61px; } .w41 { width: 41px; }
.w270 { width: 270px; } .w82 { width: 82px; } .w72 { width: 72px; }
th { font-weight: normal; padding: 3px 0 0; overflow: hidden; white-space: nowrap; background: linear-gradient(#fff, #ececec); border-right: 1px solid #bcbcbc; border-bottom: 1px solid #bcbcbc; }
td { padding: 3px 0 0 2px; overflow: hidden; white-space: nowrap; border-right: 1px solid #bcbcbc; border-bottom: 1px solid #bcbcbc; }
.rebar th { height: 19px; line-height: 15px; }
.rebar th .m { font-size: 10px; line-height: 10px; }
.rebar td { background: #ccffd6; line-height: 12px; }
.rebar .blank td { background: #fff; }
.rebar td.no, .props td.no { background: linear-gradient(#fff, #eaeaea); text-align: center; padding: 2px 0 0; }
.rebar td.no.sel, .props td.no.sel { background: #fdd08a; color: #60006a; }
th.hl { background: linear-gradient(#fbd99b, #f3bf5f); color: #60006a; }
.bk { border-right-color: #000; }
.rebar th.bk { border-right-color: #bcbcbc; }
.ctr { text-align: center; padding: 0; font-size: 11px; }
.kind { padding-left: 3px; }
.h1 td { height: 53px; } .h2 td { height: 41px; } .h3 td { height: 34px; } .h4 td { height: 29px; } .h5 td { height: 19px; }
.rebar td.shape { padding: 0; }
.rebar td.cur { background: #b2f0dc; }
.sh { display: block; width: 200px; height: 100%; }
.h1 .sh { height: 52px; } .h2 .sh { height: 40px; } .h3 .sh { height: 33px; } .h4 .sh { height: 28px; }
.t-r { fill: #f00; font: 11px "Liberation Sans", sans-serif; }
.t-b { fill: #111; font: 11px "Liberation Sans", sans-serif; }
.f { line-height: 12px; }
.d { line-height: 12px; font-size: 12px; letter-spacing: -.05px; }
.rebar td.f { padding-top: 2px; }
.bend { padding-left: 5px; }
.clip { text-align: right; padding-right: 13px; }

/* properties window */
.win { position: absolute; left: 994px; top: 0; width: 352px; height: 945px; background: #d8e4f2; border-right: 2px solid #555; border-left: 1px solid #777; display: flex; flex-direction: column; padding: 0 8px 0 7px; }
.win-title { height: 23px; flex: none; margin: 0 -7px 0 0; display: flex; align-items: center; justify-content: space-between; padding: 2px 9px 0 0; color: #7c8490; font-size: 12px; background: linear-gradient(#c8d6e6, #dde8f4); }
.win-x { width: 14px; height: 14px; border: 1px solid #8a98a8; border-radius: 2px; background: linear-gradient(45deg, transparent 42%, #778 42%, #778 58%, transparent 58%), linear-gradient(-45deg, transparent 42%, #778 42%, #778 58%, transparent 58%), #dde6f0; background-size: 8px 8px; background-position: center; background-repeat: no-repeat; }
.grid-panel { height: 718px; flex: none; background: #fff; border: 1px solid #a4acb4; padding: 0 0 0 1px; }
.props { width: 331px; }
.p20 { width: 20px; } .p121 { width: 121px; } .p190 { width: 190px; }
.props th { height: 23px; font-size: 12px; }
.props td { height: 19px; line-height: 15px; }
.props td.name { padding-left: 21px; background-repeat: no-repeat; }
.props .m { font-size: 11px; line-height: 10px; }
.props .name .m { font-size: 9.5px; letter-spacing: -.3px; }
.props td.no .m { font-size: 11px; letter-spacing: -.4px; }
.link { color: #0000e0; }
.mute td { color: #888; }
.mute td.no { color: #111; }
.sel-row .name { background: #3399ff; color: #fff; }
.sel-row .val { background: #deeeff; }
.props td.name.tree { padding-left: 30px; background-image: linear-gradient(#aaa, #aaa), linear-gradient(#aaa, #aaa); background-position: 10px 0, 10px 9px; background-size: 1px 100%, 16px 1px; }
.props td.name.tree-end { background-size: 1px 10px, 16px 1px; }
.props td.name.grp { padding-left: 4px; display: flex; align-items: center; gap: 5px; border-right: 1px solid #bcbcbc; }
.ex { width: 12px; height: 12px; border: 1px solid #aab; background: linear-gradient(#222, #222) center / 7px 1px no-repeat, #e8e8e8; flex: none; }
.ex.plus { background: linear-gradient(#222, #222) center / 7px 1px no-repeat, linear-gradient(#222, #222) center / 1px 7px no-repeat, #e8e8e8; }

.section-panel { height: 174px; margin-top: 5px; flex: none; background: #f0f0f0; border: 1px solid #8c8c8c; padding: 3px 4px 0; display: flex; flex-direction: column; }
.tb-sec { height: 25px; flex: none; gap: 0; padding-left: 1px; }
.sec-btn { margin-right: 10px; }
.tb-sec .grip { margin-right: 5px; }
.more { margin-left: auto; font-size: 14px; font-weight: bold; margin-right: -4px; align-self: flex-start; line-height: 14px; }
.tb-sec2 { height: 28px; width: 197px; margin-top: 3px; flex: none; gap: 2px; padding: 0 4px 0 1px; }
.tb-sec2 .grip { margin-right: 0; }
.sec-lbl { color: #808080; white-space: nowrap; flex: none; }
.sec-combo { display: flex; align-items: center; justify-content: flex-end; width: 132px; height: 22px; border: 1px solid #6a6a6a; background: #f6f6f6; padding-right: 5px; flex: none; }
.sec-combo .arr { border-top-color: #666; }
.section { display: block; width: 326px; height: 109px; margin-top: 1px; flex: none; }
.sec-t { fill: #555; font: 11px "Liberation Sans", sans-serif; }
.sec-s { font: 3.6px "Liberation Sans", sans-serif; }

.status { flex: 1; margin-top: 3px; display: flex; gap: 3px; position: relative; }
.st-a { width: 146px; height: 20px; border: 1px solid #d0d0d0; background: linear-gradient(#fff, #eee); padding-left: 9px; line-height: 18px; }
.st-b { width: 187px; height: 20px; border: 1px solid #d0d0d0; background: linear-gradient(#fff, #eee); }
.st-grip { position: absolute; right: 0; bottom: 3px; width: 10px; height: 10px; background: radial-gradient(circle, #b0b0b0 1px, transparent 1.2px) 0 0 / 3px 3px; }

/* red annotation arrows drawn over the screenshot */
.marks { position: absolute; left: 0; top: 0; width: 1466px; height: 945px; pointer-events: none; }
```
